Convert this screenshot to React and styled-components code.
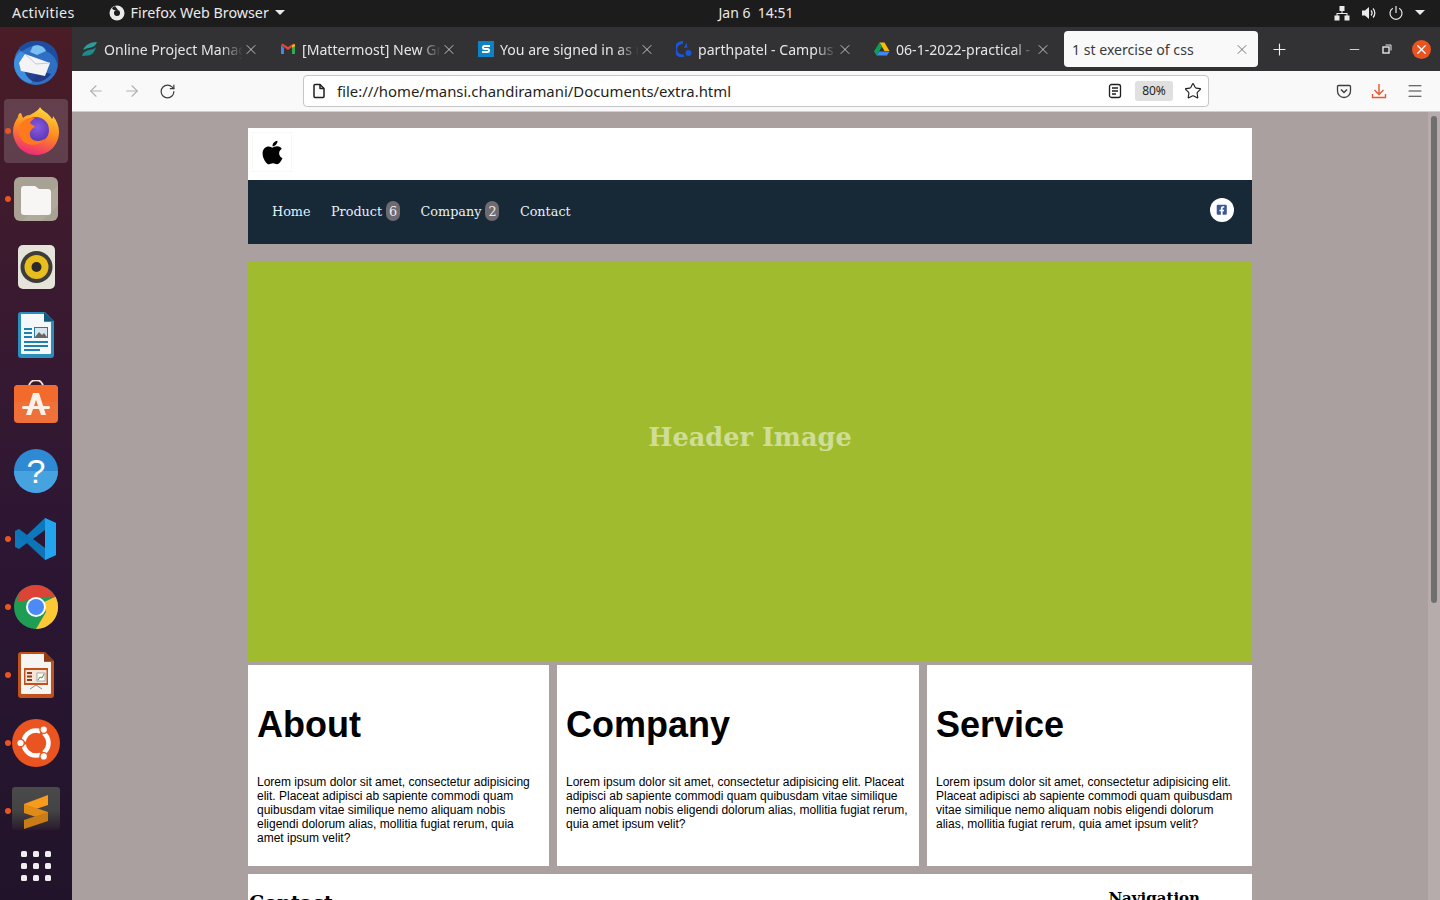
import styled, { createGlobalStyle } from "styled-components";
import { ArrowLeft, ArrowRight, RotateCw, Star, Menu, X, Plus, Minus } from "lucide-react";
import { FaApple, FaFacebookSquare } from "react-icons/fa";

const Global = createGlobalStyle`
  html, body { margin: 0; padding: 0; width: 1440px; height: 900px; overflow: hidden; }
  * { box-sizing: border-box; }
`;

const uiFont = `"Noto Sans", "Open Sans", sans-serif`;

const Screen = styled.div`
  width: 1440px;
  height: 900px;
  display: flex;
  flex-direction: column;
  overflow: hidden;
  font-family: ${uiFont};
`;

const TopBar = styled.div`
  height: 27px;
  flex: none;
  background: #1c1c1c;
  color: #eaeaea;
  font-size: 14.3px;
  display: grid;
  grid-template-columns: 1fr auto 1fr;
  align-items: center;
  padding: 0 12px 2px;
`;

const TopLeft = styled.div`
  display: flex;
  align-items: center;
`;

const Activities = styled.span`
  letter-spacing: 0.3px;
`;

const AppMenu = styled.div`
  display: flex;
  align-items: center;
  gap: 6px;
  margin-left: 34px;
`;

const Clock = styled.div`
  font-size: 14px;
  white-space: pre;
  margin-left: 72px;
`;

const TopRight = styled.div`
  display: flex;
  align-items: center;
  justify-content: flex-end;
  gap: 11px;
  padding-right: 3px;
`;

const Caret = styled.span`
  width: 0;
  height: 0;
  border-left: 5px solid transparent;
  border-right: 5px solid transparent;
  border-top: 5px solid #eaeaea;
`;

const Body = styled.div`
  flex: 1;
  display: flex;
  min-height: 0;
`;

const Dock = styled.div`
  width: 72px;
  flex: none;
  background: linear-gradient(180deg, #4a1c26 0%, #3a1a30 30%, #2c1633 60%, #21142a 100%);
  display: flex;
  flex-direction: column;
  align-items: center;
  padding-top: 4px;
`;

const DockItem = styled.div`
  position: relative;
  width: 64px;
  height: 64px;
  flex: none;
  margin-bottom: 4px;
  margin-top: ${(p) => (p.$last ? "-13px" : "0")};
  border-radius: 4px;
  display: flex;
  align-items: center;
  justify-content: center;
  background: ${(p) => (p.$active ? "rgba(255,255,255,0.16)" : "transparent")};

  &::before {
    content: "";
    display: ${(p) => (p.$running ? "block" : "none")};
    position: absolute;
    left: 1px;
    top: 29px;
    width: 6px;
    height: 6px;
    border-radius: 50%;
    background: #e95420;
  }
`;

const Main = styled.div`
  flex: 1;
  min-width: 0;
  display: flex;
  flex-direction: column;
`;

const TabStrip = styled.div`
  height: 44px;
  flex: none;
  background: #323234;
  display: flex;
  align-items: center;
  padding-left: 2px;
`;

const Tab = styled.div`
  width: ${(p) => (p.$active ? "194px" : "198px")};
  margin-right: ${(p) => (p.$active ? "12px" : "0")};
  height: 36px;
  flex: none;
  display: flex;
  align-items: center;
  padding: 0 8px;
  border-radius: 4px;
  background: ${(p) => (p.$active ? "#f9f9fa" : "transparent")};
  color: ${(p) => (p.$active ? "#3a3a3e" : "#e6e6e8")};
  font-size: 14.1px;
`;

const TabIcon = styled.span`
  width: 16px;
  height: 16px;
  flex: none;
  margin-right: 6px;
  display: flex;
`;

const TabTitle = styled.span`
  flex: 1;
  min-width: 0;
  white-space: nowrap;
  overflow: hidden;
  ${(p) =>
    p.$active
      ? ""
      : `-webkit-mask-image: linear-gradient(90deg, #000 84%, transparent 100%);
         mask-image: linear-gradient(90deg, #000 84%, transparent 100%);`}
`;

const TabClose = styled.span`
  width: 16px;
  flex: none;
  display: flex;
  justify-content: center;
  margin-right: ${(p) => (p.$active ? "0" : "5px")};
  color: ${(p) => (p.$active ? "#55555a" : "#e6e6e8")};
`;

const NewTab = styled.div`
  display: flex;
  color: #f0f0f0;
`;

const WindowButtons = styled.div`
  margin-left: auto;
  display: flex;
  align-items: center;
  gap: 20px;
  padding-right: 9px;
  color: #e6e6e6;
`;

const CloseButton = styled.div`
  width: 19px;
  height: 19px;
  border-radius: 50%;
  background: #e95420;
  color: #fff;
  display: flex;
  align-items: center;
  justify-content: center;
`;

const Toolbar = styled.div`
  height: 41px;
  flex: none;
  background: #f9f9fa;
  border-bottom: 1px solid #cfcfd2;
  display: flex;
  align-items: center;
  color: #3d3d40;
`;

const NavIcons = styled.div`
  width: 231px;
  flex: none;
  display: flex;
  align-items: center;
  gap: 18px;
  padding-left: 15px;
`;

const NavIcon = styled.span`
  display: flex;
  color: ${(p) => (p.$dim ? "#b1b1b3" : "#3d3d40")};
`;

const UrlBar = styled.div`
  width: 906px;
  height: 32px;
  flex: none;
  margin-top: -1px;
  background: #fff;
  border: 1px solid #c6c6c9;
  border-radius: 4px;
  display: flex;
  align-items: center;
  padding: 0 6px 0 7px;
  font-size: 14.9px;
  color: #1f1f22;
`;

const UrlText = styled.span`
  flex: 1;
  margin-left: 10px;
  white-space: nowrap;
`;

const ZoomPill = styled.span`
  width: 38px;
  height: 20px;
  margin: 0 11px 0 12px;
  border-radius: 3px;
  background: #e0e0e1;
  font-size: 12px;
  display: flex;
  align-items: center;
  justify-content: center;
`;

const ToolbarRight = styled.div`
  margin-left: 127px;
  display: flex;
  align-items: center;
  gap: 19px;
`;

const Viewport = styled.div`
  flex: 1;
  min-height: 0;
  background: #aaa09f;
  display: flex;
  overflow: hidden;
`;

const Page = styled.div`
  width: 1356px;
  flex: none;
  padding: 16px 176px 0;
`;

const LogoRow = styled.div`
  height: 52px;
  background: #fff;
  padding: 4px 0 0 4px;
`;

const LogoBox = styled.div`
  width: 40px;
  height: 40px;
  border: 1px solid #f8f8f8;
  display: flex;
  align-items: center;
  justify-content: center;
  font-size: 27px;
  color: #000;
`;

const Nav = styled.nav`
  height: 64px;
  background: #172836;
  display: flex;
  align-items: center;
  padding: 0 18px 2px 24px;
  gap: 20.4px;
  font-family: "DejaVu Serif", serif;
  font-size: 12.8px;
  color: #e4f1fb;
`;

const NavLink = styled.a`
  display: flex;
  align-items: center;
  gap: 4px;
`;

const Badge = styled.span`
  width: 14px;
  height: 20px;
  border-radius: 7px;
  background: #6e6a70;
  color: #eee;
  display: flex;
  align-items: center;
  justify-content: center;
  font-size: 12.8px;
`;

const Social = styled.span`
  margin-left: auto;
  margin-top: -2px;
  width: 24px;
  height: 24px;
  border-radius: 50%;
  background: #fff;
  color: #3b5998;
  display: flex;
  align-items: center;
  justify-content: center;
  font-size: 11.5px;
`;

const Hero = styled.div`
  height: 400px;
  margin-top: 18px;
  background: #a0bc2e;
  display: flex;
  justify-content: center;
  padding: 160px 0 0 0;
  font-family: "DejaVu Serif", serif;
  font-weight: 700;
  font-size: 25.6px;
  color: rgba(255, 255, 255, 0.5);
`;

const Cards = styled.div`
  display: grid;
  grid-template-columns: 301px 362px 325px;
  gap: 8px;
  margin-top: 3px;
`;

const Card = styled.section`
  height: 201px;
  background: #fff;
  padding: 39px 9px 0;
  font-family: "Liberation Sans", Arial, sans-serif;
  color: #000;
`;

const CardTitle = styled.h1`
  margin: 0 0 29px;
  font-size: 36px;
  line-height: 42px;
  font-weight: 700;
`;

const CardText = styled.p`
  margin: 0;
  font-size: 12px;
  line-height: 14px;
`;

const Footer = styled.div`
  margin-top: 8px;
  height: 60px;
  background: #fff;
  display: flex;
  justify-content: space-between;
  padding: 14px 52px 0 1px;
  font-family: "DejaVu Serif", serif;
  font-weight: 700;
  color: #000;
`;

const FooterTitle = styled.div`
  font-size: ${(p) => (p.$large ? "19.2px" : "15px")};
  line-height: ${(p) => (p.$large ? "24px" : "20px")};
  margin-top: ${(p) => (p.$large ? "3px" : "0")};
`;

const ScrollTrack = styled.div`
  width: 12px;
  flex: none;
  background: #b5acab;
  padding: 4px 3px 0;
`;

const ScrollThumb = styled.div`
  width: 6px;
  height: 487px;
  border-radius: 3px;
  background: #6f6f6f;
`;

// favicons
const ZohoIcon = () => (
  <svg width="16" height="16" viewBox="0 0 16 16">
    <path d="M1 9c2-5 7-8 14-8-1 3-3 5-6 5.5C6 7 3 8 1 9z" fill="#2a9d9a" />
    <path d="M0 15c1-4 5-6 9-6.5 2-.3 4-1 5-2.500-1 5-4 8-8 8.500-2 .3-4 .5-6 .5z" fill="#1d8a8c" />
  </svg>
);
const GmailIcon = () => (
  <svg width="16" height="16" viewBox="0 0 16 16">
    <path d="M1 4v9h3V7z" fill="#4285f4" />
    <path d="M12 7v6h3V4z" fill="#34a853" />
    <path d="M1 4l7 5 7-5-1.5-1.500L8 6 2.5 2.500z" fill="#ea4335" />
    <path d="M12 4.5L15 3v2l-3 2z" fill="#fbbc04" />
  </svg>
);
const SIcon = () => (
  <svg width="16" height="16" viewBox="0 0 16 16">
    <rect width="16" height="16" fill="#0b83c6" />
    <path d="M12 5H6.5a1.5 1.5 0 0 0 0 3h3a1.5 1.5 0 0 1 0 3H4" fill="none" stroke="#fff" strokeWidth="2" />
  </svg>
);
const CampusIcon = () => (
  <svg width="16" height="16" viewBox="0 0 16 16">
    <path d="M7 1.5a6.8 6.8 0 1 0 1 13.4" fill="none" stroke="#1a56d6" strokeWidth="3" />
    <path d="M8 7l2.5-5.500 1 5z" fill="#1a56d6" />
    <circle cx="12.5" cy="12" r="3" fill="#1a56d6" />
  </svg>
);
const DriveIcon = () => (
  <svg width="16" height="16" viewBox="0 0 16 16">
    <path d="M5.5 1.5h5l5 8.500h-5z" fill="#fbbc04" />
    <path d="M5 10.5h10.500L13 14.500H2.500z" fill="#4285f4" />
    <path d="M5.5 1.5l2.5 4.300L2.500 14.500 0 10.300z" fill="#0f9d58" />
  </svg>
);

// dock icons
const Thunderbird = () => (
  <svg width="50" height="50" viewBox="0 0 50 50">
    <circle cx="25" cy="25" r="22" fill="#2f6fc4" />
    <path d="M8 10C16 1 33 0 42 9c5 5 6 13 5 19-2-9-7-13-12-15-2-5-8-7-13-5-5 1-9 4-12 6z" fill="#1d4d9f" />
    <path d="M3 26c0-5 3-10 7-13l8 6-5 6 12 12-5 8C12 45 3 36 3 26z" fill="#3f8fe0" />
    <path d="M12 28l28 8c-3 4-8 8-14 8-7 0-12-6-14-16z" fill="#1f2e78" opacity=".8" />
    <path d="M8 25l6-9 25 9-5 13-24-5z" fill="#f4f4f6" />
    <path d="M14 16l11 10 14-1" fill="none" stroke="#c8c8d2" strokeWidth="1" />
    <path d="M22 8c5-2 11 0 13 5l-9 4-7-3z" fill="#7cc0f0" />
  </svg>
);
const Firefox = () => (
  <svg width="46" height="48" viewBox="0 0 46 48">
    <defs>
      <linearGradient id="ffA" x1="0.7" y1="0" x2="0.4" y2="1">
        <stop offset="0" stopColor="#ffdd3c" />
        <stop offset=".5" stopColor="#ff8a1f" />
        <stop offset="1" stopColor="#ee2a78" />
      </linearGradient>
      <radialGradient id="ffB" cx=".55" cy=".4" r=".7">
        <stop offset="0" stopColor="#8a5ae0" />
        <stop offset="1" stopColor="#4b2ea8" />
      </radialGradient>
    </defs>
    <path d="M27 0c2 4 9 6 12 12 1-1 1-2 1-3 4 5 6 10 6 16 0 13-10 23-23 23S0 37 0 24C0 19 2 14 5 10c0-2 1-4 3-4l2 5c2-2 4-3 7-3 3-2 8-4 10-8z" fill="url(#ffA)" />
    <circle cx="23" cy="23" r="13" fill="url(#ffB)" />
    <path d="M7 19c2-6 8-9 15-8-2 1-4 3-5 5 2 2 4 2 5 4-4 2-7 6-4 11 3 4 10 4 15 0-5 7-15 9-22 4C6 31 5 24 7 19z" fill="#ff7a1c" />
  </svg>
);
const Files = () => (
  <svg width="44" height="44" viewBox="0 0 44 44">
    <rect width="44" height="44" rx="6" fill="#a8a294" />
    <path d="M44 8L8 44h20L44 28z" fill="#b5af9f" opacity=".6" />
    <path d="M7 12a3 3 0 0 1 3-3h11l4 3h9a3 3 0 0 1 3 3v20a3 3 0 0 1-3 3H10a3 3 0 0 1-3-3z" fill="#f7f6f4" />
  </svg>
);
const Rhythmbox = () => (
  <svg width="37" height="44" viewBox="0 0 37 44">
    <rect width="37" height="44" rx="5" fill="#e6e3da" />
    <circle cx="18.5" cy="22" r="16" fill="#3d3c3a" />
    <circle cx="18.5" cy="22" r="12" fill="#e8bd1e" />
    <circle cx="18.5" cy="22" r="5" fill="#2c2b29" />
  </svg>
);
const Writer = () => (
  <svg width="36" height="46" viewBox="0 0 36 46">
    <path d="M3 0h24l9 9v34a3 3 0 0 1-3 3H3a3 3 0 0 1-3-3V3a3 3 0 0 1 3-3z" fill="#2a8fbd" />
    <path d="M3 2h23v8h7v31a1 1 0 0 1-1 1H4a1 1 0 0 1-1-1z" fill="#f5f8fa" />
    <path d="M26 0l10 9h-10z" fill="#135a80" />
    <path d="M6 16h8v2H6zM6 20h8v2H6zM6 24h8v2H6zM6 29h24v2H6zM6 33h24v2H6zM6 37h16v2H6z" fill="#1f7fb0" />
    <rect x="16" y="15" width="14" height="11" fill="#1f7fb0" />
    <rect x="17" y="16" width="12" height="9" fill="#d9e6ee" />
    <path d="M17 25l4-5 3 3 2-2 3 4z" fill="#666" />
  </svg>
);
const Software = () => (
  <svg width="44" height="46" viewBox="0 0 44 46">
    <path d="M15 7c0-9 14-9 14 0" fill="none" stroke="#f6e2cf" strokeWidth="2" />
    <rect y="5" width="44" height="38" rx="4" fill="#f0703a" />
    <path d="M0 9a4 4 0 0 1 4-4h36a4 4 0 0 1 4 4v13H0z" fill="#f26a2c" />
    <path d="M19 13h6l7 22h-5l-5-15-5 15h-5z" fill="#fdf0e6" />
    <rect x="8" y="26" width="28" height="3" rx="1.5" fill="#fdf0e6" />
  </svg>
);
const Help = () => (
  <svg width="44" height="44" viewBox="0 0 44 44">
    <circle cx="22" cy="22" r="22" fill="#2f8ad4" />
    <path d="M0 22h44a22 22 0 0 1-44 0z" fill="#47a2e0" />
    <text x="22" y="34" textAnchor="middle" fontFamily="Liberation Sans" fontSize="34" fill="#fff">?</text>
  </svg>
);
const VSCode = () => (
  <svg width="44" height="44" viewBox="0 0 44 44">
    <path d="M31 1l11 5v32l-11 5-18-17-8 6-4-2V14l4-2 8 6z" fill="#0e78bc" />
    <path d="M31 1l11 5v32l-11 5z" fill="#22a4ef" />
    <path d="M31 13L19 22l12 9z" fill="#2c1633" />
    <path d="M1 14l4-2 26 21v10L1 16z" fill="#0a6cae" opacity=".35" />
  </svg>
);
const Chrome = () => (
  <svg width="44" height="44" viewBox="0 0 44 44">
    <circle cx="22" cy="22" r="22" fill="#1f9d55" />
    <path d="M22 0a22 22 0 0 1 19.5 11.800L22 12l-8 3-10 2L4.500 8.500A22 22 0 0 1 22 0z" fill="#db4437" />
    <path d="M41.5 11.800A22 22 0 0 1 22 44l10-17-2-10z" fill="#fcc934" />
    <circle cx="22" cy="22" r="10" fill="#fff" />
    <circle cx="22" cy="22" r="8" fill="#4c8bf5" />
  </svg>
);
const Impress = () => (
  <svg width="36" height="46" viewBox="0 0 36 46">
    <path d="M3 0h24l9 9v34a3 3 0 0 1-3 3H3a3 3 0 0 1-3-3V3a3 3 0 0 1 3-3z" fill="#c2521c" />
    <path d="M3 2h23v8h7v31a1 1 0 0 1-1 1H4a1 1 0 0 1-1-1z" fill="#f7f5f2" />
    <path d="M26 0l10 9h-10z" fill="#8f3c14" />
    <rect x="6" y="16" width="24" height="17" fill="#c2521c" />
    <rect x="7.5" y="18" width="21" height="13" fill="#f6e4d8" />
    <path d="M9 20h5v2H9zM9 23.5h5v2H9zM9 27h5v2H9z" fill="#8f3c14" />
    <rect x="19" y="21" width="8" height="8" fill="#fff" stroke="#777" strokeWidth=".6" />
    <path d="M20 28l2-3 2 1 2-4" fill="none" stroke="#3a9a3a" strokeWidth="1" />
    <path d="M18 33l-6 4M18 33l6 4" stroke="#888" strokeWidth="1" />
  </svg>
);
const Ubuntu = () => (
  <svg width="48" height="48" viewBox="0 0 48 48">
    <circle cx="24" cy="24" r="24" fill="#e95420" />
    <circle cx="24" cy="24" r="12.5" fill="none" stroke="#fff" strokeWidth="4.5" />
    <path d="M24 24l-14 0M24 24l7 12M24 24l7-12" stroke="#e95420" strokeWidth="3" />
    <circle cx="24" cy="24" r="9" fill="#e95420" />
    <circle cx="8.5" cy="24" r="3.8" fill="#fff" stroke="#e95420" strokeWidth="1.4" />
    <circle cx="31.75" cy="10.6" r="3.8" fill="#fff" stroke="#e95420" strokeWidth="1.4" />
    <circle cx="31.75" cy="37.4" r="3.8" fill="#fff" stroke="#e95420" strokeWidth="1.4" />
  </svg>
);
const Sublime = () => (
  <svg width="48" height="48" viewBox="0 0 48 48">
    <defs>
      <linearGradient id="subBg" x1="0" y1="0" x2="0" y2="1">
        <stop offset="0" stopColor="#4a4a4a" />
        <stop offset=".55" stopColor="#444" />
        <stop offset="1" stopColor="#2a1a2c" />
      </linearGradient>
    </defs>
    <rect width="48" height="43" rx="3" fill="url(#subBg)" />
    <path d="M12 17l24-9v10L12 26z" fill="#f89a1c" />
    <path d="M12 17v9l24 8v-9z" fill="#e08a18" />
    <path d="M36 25v9l-24 8v-9z" fill="#c97c16" />
  </svg>
);
const AppGrid = () => (
  <svg width="30" height="30" viewBox="0 0 30 30" fill="#eeeeee">
    {[0, 12, 24].map((y) =>
      [0, 12, 24].map((x) => <rect key={`${x}-${y}`} x={x} y={y} width="6" height="6" rx="1.5" />)
    )}
  </svg>
);

const FirefoxMono = () => (
  <svg width="16" height="16" viewBox="0 0 16 16">
    <circle cx="8" cy="8" r="7.5" fill="#eaeaea" />
    <circle cx="8" cy="8" r="3" fill="#1c1c1c" />
    <path d="M3 3c1 3 4 2 6 2L6 1z" fill="#1c1c1c" />
  </svg>
);
const NetworkIcon = () => (
  <svg width="16" height="16" viewBox="0 0 16 16" fill="#eaeaea">
    <rect x="5.5" y="1" width="5" height="5" />
    <rect x="0.5" y="10.5" width="5" height="5" />
    <rect x="10.5" y="10.5" width="5" height="5" />
    <path d="M7.5 6h1v2h5v3h-1V9h-9v2h-1V8h5z" />
  </svg>
);
const VolumeIcon = () => (
  <svg width="16" height="16" viewBox="0 0 16 16" fill="none">
    <path d="M1 5.5h3L8 2v12L4 10.500H1z" fill="#eaeaea" />
    <path d="M10 5.5a3.5 3.5 0 0 1 0 5M12 3.500a6.500 6.500 0 0 1 0 9" stroke="#eaeaea" strokeWidth="1.3" />
  </svg>
);
const PowerIcon = () => (
  <svg width="16" height="16" viewBox="0 0 16 16" fill="none" stroke="#eaeaea" strokeWidth="1.2">
    <path d="M4.8 3.200a6 6 0 1 0 6.400 0" />
    <path d="M8 1v7" />
  </svg>
);
const RestoreIcon = () => (
  <svg width="10" height="10" viewBox="0 0 10 10" fill="none" stroke="#e6e6e6" strokeWidth="1">
    <rect x="1" y="3" width="6" height="6" strokeWidth="1.4" />
    <path d="M3.5 1h5.500v5.500" />
  </svg>
);
const PageIcon = () => (
  <svg width="16" height="16" viewBox="0 0 16 16" fill="none" stroke="#1f1f22" strokeWidth="1.5" strokeLinejoin="round">
    <path d="M3 2.500a1 1 0 0 1 1-1h5l4 4v8a1 1 0 0 1-1 1H4a1 1 0 0 1-1-1z" />
    <path d="M9 1.500v4h4" />
  </svg>
);
const ReaderIcon = () => (
  <svg width="16" height="16" viewBox="0 0 16 16" fill="none" stroke="#1f1f22" strokeWidth="1.3">
    <rect x="2.5" y="1.5" width="11" height="13" rx="2" />
    <path d="M5 5h6M5 8h6M5 11h4" />
  </svg>
);
const PocketIcon = () => (
  <svg width="16" height="16" viewBox="0 0 16 16" fill="none" stroke="#3d3d40" strokeWidth="1.3">
    <path d="M2.5 2.500h11a1 1 0 0 1 1 1V8a6.500 6.500 0 0 1-13 0V3.500a1 1 0 0 1 1-1z" />
    <path d="M5 6.5l3 3 3-3" strokeWidth="1.5" />
  </svg>
);
const DownloadIcon = () => (
  <svg width="16" height="16" viewBox="0 0 16 16" fill="none" stroke="#e9572b" strokeWidth="1.4">
    <path d="M8 1v10M3.500 7L8 11.500 12.500 7" />
    <path d="M1.500 11v3.500h13V11" />
  </svg>
);

const tabs = [
  { title: "Online Project Management", icon: <ZohoIcon /> },
  { title: "[Mattermost] New Group", icon: <GmailIcon /> },
  { title: "You are signed in as mansi", icon: <SIcon /> },
  { title: "parthpatel - Campus 2022", icon: <CampusIcon /> },
  { title: "06-1-2022-practical - Google", icon: <DriveIcon /> },
];

const dockApps = [
  { key: "thunderbird", icon: <Thunderbird /> },
  { key: "firefox", icon: <Firefox />, active: true, running: true },
  { key: "files", icon: <Files />, running: true },
  { key: "rhythmbox", icon: <Rhythmbox /> },
  { key: "writer", icon: <Writer /> },
  { key: "software", icon: <Software /> },
  { key: "help", icon: <Help /> },
  { key: "vscode", icon: <VSCode />, running: true },
  { key: "chrome", icon: <Chrome />, running: true },
  { key: "impress", icon: <Impress />, running: true },
  { key: "ubuntu", icon: <Ubuntu />, running: true },
  { key: "sublime", icon: <Sublime />, running: true },
  { key: "grid", icon: <AppGrid />, last: true },
];

const lorem =
  "Lorem ipsum dolor sit amet, consectetur adipisicing elit. Placeat adipisci ab sapiente commodi quam quibusdam vitae similique nemo aliquam nobis eligendi dolorum alias, mollitia fugiat rerum, quia amet ipsum velit?";

export default function App() {
  return (
    <Screen>
      <Global />
      <TopBar>
        <TopLeft>
          <Activities>Activities</Activities>
          <AppMenu>
            <FirefoxMono />
            Firefox Web Browser
            <Caret />
          </AppMenu>
        </TopLeft>
        <Clock>{"Jan 6  14:51"}</Clock>
        <TopRight>
          <NetworkIcon />
          <VolumeIcon />
          <PowerIcon />
          <Caret />
        </TopRight>
      </TopBar>
      <Body>
        <Dock>
          {dockApps.map((app) => (
            <DockItem key={app.key} $active={app.active} $running={app.running} $last={app.last}>
              {app.icon}
            </DockItem>
          ))}
        </Dock>
        <Main>
          <TabStrip>
            {tabs.map((tab) => (
              <Tab key={tab.title}>
                <TabIcon>{tab.icon}</TabIcon>
                <TabTitle>{tab.title}</TabTitle>
                <TabClose>
                  <X size={19} strokeWidth={1.2} />
                </TabClose>
              </Tab>
            ))}
            <Tab $active>
              <TabTitle $active>1 st exercise of css</TabTitle>
              <TabClose $active>
                <X size={19} strokeWidth={1.2} />
              </TabClose>
            </Tab>
            <NewTab>
              <Plus size={19} strokeWidth={1.4} />
            </NewTab>
            <WindowButtons>
              <Minus size={15} strokeWidth={1.4} />
              <RestoreIcon />
              <CloseButton>
                <X size={15} strokeWidth={2} />
              </CloseButton>
            </WindowButtons>
          </TabStrip>
          <Toolbar>
            <NavIcons>
              <NavIcon $dim>
                <ArrowLeft size={18} strokeWidth={1.5} />
              </NavIcon>
              <NavIcon $dim>
                <ArrowRight size={18} strokeWidth={1.5} />
              </NavIcon>
              <NavIcon>
                <RotateCw size={17} strokeWidth={1.7} />
              </NavIcon>
            </NavIcons>
            <UrlBar>
              <PageIcon />
              <UrlText>file:///home/mansi.chandiramani/Documents/extra.html</UrlText>
              <ReaderIcon />
              <ZoomPill>80%</ZoomPill>
              <Star size={18} strokeWidth={1.5} />
            </UrlBar>
            <ToolbarRight>
              <PocketIcon />
              <DownloadIcon />
              <Menu size={18} strokeWidth={1.4} />
            </ToolbarRight>
          </Toolbar>
          <Viewport>
            <Page>
              <LogoRow>
                <LogoBox>
                  <FaApple />
                </LogoBox>
              </LogoRow>
              <Nav>
                <NavLink>Home</NavLink>
                <NavLink>
                  Product <Badge>6</Badge>
                </NavLink>
                <NavLink>
                  Company <Badge>2</Badge>
                </NavLink>
                <NavLink>Contact</NavLink>
                <Social>
                  <FaFacebookSquare />
                </Social>
              </Nav>
              <Hero>Header Image</Hero>
              <Cards>
                <Card>
                  <CardTitle>About</CardTitle>
                  <CardText>{lorem}</CardText>
                </Card>
                <Card>
                  <CardTitle>Company</CardTitle>
                  <CardText>{lorem}</CardText>
                </Card>
                <Card>
                  <CardTitle>Service</CardTitle>
                  <CardText>{lorem}</CardText>
                </Card>
              </Cards>
              <Footer>
                <FooterTitle $large>Contact</FooterTitle>
                <FooterTitle>Navigation</FooterTitle>
              </Footer>
            </Page>
            <ScrollTrack>
              <ScrollThumb />
            </ScrollTrack>
          </Viewport>
        </Main>
      </Body>
    </Screen>
  );
}
